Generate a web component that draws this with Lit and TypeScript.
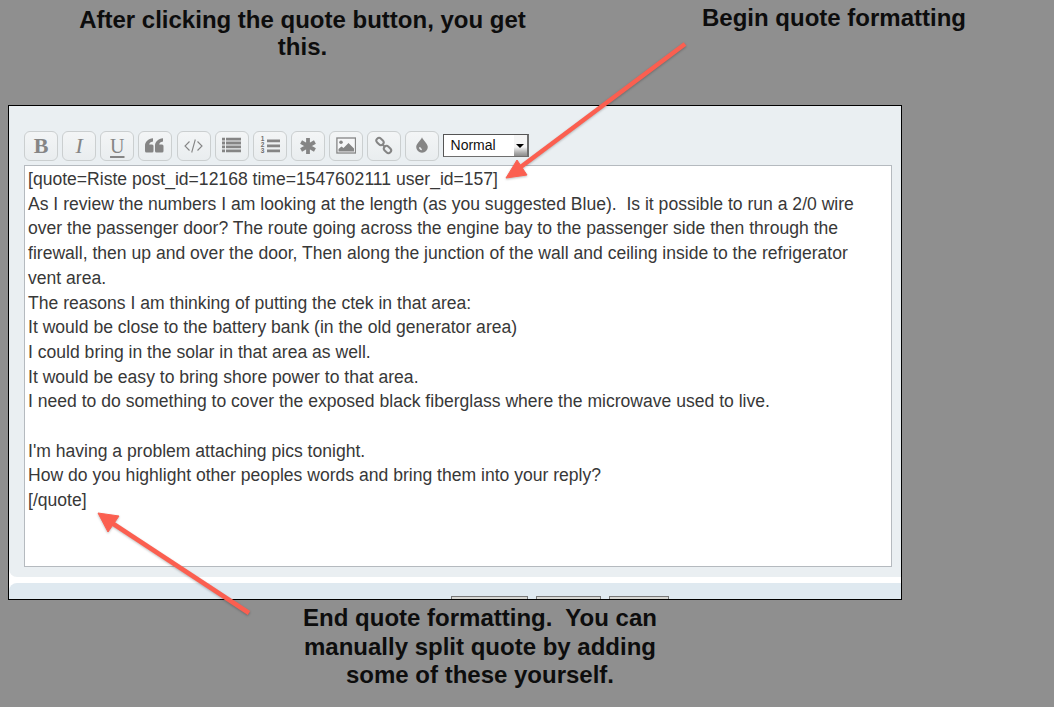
import { LitElement, html, css, svg } from 'lit'
import { customElement } from 'lit/decorators.js'

const lines = [
  '[quote=Riste post_id=12168 time=1547602111 user_id=157]',
  'As I review the numbers I am looking at the length (as you suggested Blue).\u00a0 Is it possible to run a 2/0 wire',
  'over the passenger door? The route going across the engine bay to the passenger side then through the',
  'firewall, then up and over the door, Then along the junction of the wall and ceiling inside to the refrigerator',
  'vent area.',
  'The reasons I am thinking of putting the ctek in that area:',
  'It would be close to the battery bank (in the old generator area)',
  'I could bring in the solar in that area as well.',
  'It would be easy to bring shore power to that area.',
  'I need to do something to cover the exposed black fiberglass where the microwave used to live.',
  '\u00a0',
  "I'm having a problem attaching pics tonight.",
  'How do you highlight other peoples words and bring them into your reply?',
  '[/quote]',
]

// toolbar icons, all on a 20x20 box
const icons = {
  quote: svg`<path d="M0 10C0 5.500 3.200 3 8 2.300V5.500C5.500 5.800 4.400 7 4.200 8.500H7Q8.500 8.500 8.500 10V15Q8.500 16.500 7 16.500H1.500Q0 16.500 0 15zM10 10C10 5.500 13.200 3 18 2.300V5.500C15.500 5.800 14.400 7 14.200 8.500H17Q18.500 8.500 18.500 10V15Q18.500 16.500 17 16.500H11.500Q10 16.500 10 15z"/>`,
  code: svg`<path d="M5.500 5.500 1 10l4.500 4.500M13.500 5.500 18 10l-4.500 4.500M11.300 3.500l-3.600 13" fill="none" stroke="currentColor" stroke-width="1.100"/>`,
  list: svg`<path d="M0 1.700h3v2.800H0zM4 1.700h15v2.800H4zM0 5.600h3v2.800H0zM4 5.600h15v2.800H4zM0 9.500h3v2.800H0zM4 9.500h15v2.800H4zM0 13.400h3v2.800H0zM4 13.400h15v2.800H4z"/>`,
  ordered: svg`<path d="M7 3.500h13v2.700H7zM7 8.500h13v2.700H7zM7 13.500h13v2.700H7z"/>`,
  star: svg`<g stroke="currentColor" stroke-width="3.800"><path d="M10 2v16M3.070 6l13.860 8M16.930 6l-13.860 8"/></g>`,
  image: svg`<rect x="0.900" y="2" width="18.600" height="15" fill="#f6f7f8" stroke="currentColor" stroke-width="1.300"/><circle cx="5" cy="6.300" r="1.800"/><path d="M2.500 15.500v-2.500l3-2.500 2 1.500 5-5 5.500 5.500v3z"/>`,
  link: svg`<g fill="none" stroke="currentColor" stroke-width="2"><rect x="2" y="2.800" width="8" height="5.400" rx="2.700" transform="rotate(45 6 5.500)"/><rect x="9.500" y="10.800" width="8" height="5.400" rx="2.700" transform="rotate(45 13.500 13.500)"/><path d="M8.500 8.500l2.500 2.500"/></g>`,
  drop: svg`<path fill-rule="evenodd" d="M10 1.200c1 3 5.800 6.500 5.800 9.800a5.800 5.800 0 0 1-11.600 0c0-3.300 4.800-6.800 5.800-9.800zM7 11.200c0 1.700 1.200 2.900 2.800 3v-1.500c-.7-.1-1.200-.7-1.200-1.500z"/>`,
}

@customElement('app-root')
export class AppRoot extends LitElement {
  static styles = css`
    :host {
      display: block;
      position: relative;
      height: 707px;
      overflow: hidden;
      background: #8f8f8f;
      font-family: 'Liberation Sans', Arial, sans-serif;
    }

    .notes {
      display: flex;
      height: 105px;
      box-sizing: border-box;
      padding-top: 5.500px;
      color: #0d0d0d;
      font-size: 24px;
      font-weight: 700;
      line-height: 27px;
      text-align: center;
    }

    .note-left {
      width: 447px;
      margin-left: 79px;
    }

    .note-right {
      margin: -2px 0 0 176px;
    }

    .window {
      width: 894px;
      height: 495px;
      margin-left: 8px;
      box-sizing: border-box;
      border: 1px solid #000;
      background: #fff;
      display: flex;
      flex-direction: column;
      overflow: hidden;
    }

    .editor {
      height: 471px;
      flex: none;
      box-sizing: border-box;
      padding: 25px 9px 0 15px;
      background: #eaeff2;
      border-bottom-left-radius: 8px;
    }

    .toolbar {
      display: flex;
      align-items: center;
      gap: 4.150px;
      height: 30px;
      margin-bottom: 4px;
    }

    .tool {
      width: 34px;
      height: 30px;
      flex: none;
      box-sizing: border-box;
      border: 1px solid #cbcfd0;
      border-radius: 6px;
      background: linear-gradient(#f3f5f6, #e9edef);
      color: #858585;
      display: flex;
      align-items: center;
      justify-content: center;
      font-family: 'Liberation Serif', serif;
      font-size: 22px;
      font-weight: 700;
    }

    .tool svg {
      width: 20px;
      height: 20px;
      flex: none;
      fill: currentColor;
    }

    .tool.ordered {
      position: relative;
    }

    .tool.ordered span {
      position: absolute;
      left: 7px;
      top: 4px;
      font-family: 'Liberation Sans', sans-serif;
      font-size: 6.500px;
      line-height: 6.200px;
      white-space: pre;
      color: #6d6d6d;
    }

    .tool.italic {
      font-style: italic;
      font-weight: 400;
    }

    .tool.under {
      font-size: 20px;
      font-weight: 400;
      text-decoration: underline;
      text-underline-offset: 3px;
      text-decoration-thickness: 1.500px;
    }

    .select {
      width: 86px;
      height: 23px;
      margin: -1px 0 0 -1px;
      box-sizing: border-box;
      border: 1px solid #555;
      border-right: 2px solid #6e6e6e;
      border-bottom-color: #6e6e6e;
      background: #fff;
      display: flex;
      justify-content: space-between;
      color: #111;
      font-size: 14px;
      line-height: 20px;
      padding-left: 7px;
    }

    .select i {
      width: 13px;
      background: linear-gradient(#f5f5f5 0 12px, #a8a8a8 18px, #8c8c8c);
      display: flex;
      justify-content: center;
      padding-top: 9px;
      box-sizing: border-box;
    }

    .select i::after {
      content: '';
      width: 0;
      height: 0;
      border: 4px solid transparent;
      border-top: 4px solid #000;
      border-bottom: 0;
    }

    .text {
      height: 402px;
      box-sizing: border-box;
      border: 1px solid #b5babf;
      background: #fff;
      padding: 1px 0 0 3px;
      color: #383838;
      font-size: 17.570px;
      line-height: 24.700px;
      white-space: pre;
    }

    .footer {
      flex: 1;
      margin-top: 6px;
      background: #dfe9f0;
      border-top-left-radius: 8px;
      display: flex;
      align-items: flex-start;
      padding: 13px 0 0 442px;
      gap: 8px;
    }

    .footer b {
      height: 10px;
      box-sizing: border-box;
      border: 1px solid #777;
      background: #d6d6d2;
    }

    .caption {
      width: 420px;
      margin: 4px 0 0 270px;
      color: #0d0d0d;
      font-size: 24px;
      font-weight: 700;
      line-height: 28.500px;
      text-align: center;
    }

    .arrows {
      position: absolute;
      left: 0;
      top: 0;
      width: 1054px;
      height: 707px;
      pointer-events: none;
      filter: drop-shadow(0 1px 1px rgba(0, 0, 0, 0.25));
    }
  `

  private tool(icon: keyof typeof icons) {
    return html`<div class="tool"><svg viewBox="0 0 20 20">${icons[icon]}</svg></div>`
  }

  render() {
    return html`
      <div class="notes">
        <div class="note-left">After clicking the quote button, you get this.</div>
        <div class="note-right">Begin quote formatting</div>
      </div>
      <div class="window">
        <div class="editor">
          <div class="toolbar">
            <div class="tool">B</div>
            <div class="tool italic">I</div>
            <div class="tool under">U</div>
            ${this.tool('quote')} ${this.tool('code')} ${this.tool('list')}
            <div class="tool ordered">
              <span>1\n2\n3</span>
              <svg viewBox="0 0 20 20">${icons.ordered}</svg>
            </div>
            ${this.tool('star')} ${this.tool('image')} ${this.tool('link')} ${this.tool('drop')}
            <div class="select">Normal<i></i></div>
          </div>
          <div class="text">${lines.join('\n')}</div>
        </div>
        <div class="footer">
          <b style="width: 77px"></b>
          <b style="width: 65px"></b>
          <b style="width: 60px"></b>
        </div>
      </div>
      <div class="caption">
        End quote formatting.&nbsp; You can manually split quote by adding some of these yourself.
      </div>
      <svg class="arrows" viewBox="0 0 1054 707">
        <g fill="#fb5f50" stroke="#fb5f50">
          <path d="M685 44 518 169" stroke-width="4.500" />
          <path d="M506 178 517 160 527 175z" stroke-width="1" />
          <path d="M249 613 112 523" stroke-width="4.500" />
          <path d="M98 513 119 516 108 532z" stroke-width="1" />
        </g>
      </svg>
    `
  }
}
